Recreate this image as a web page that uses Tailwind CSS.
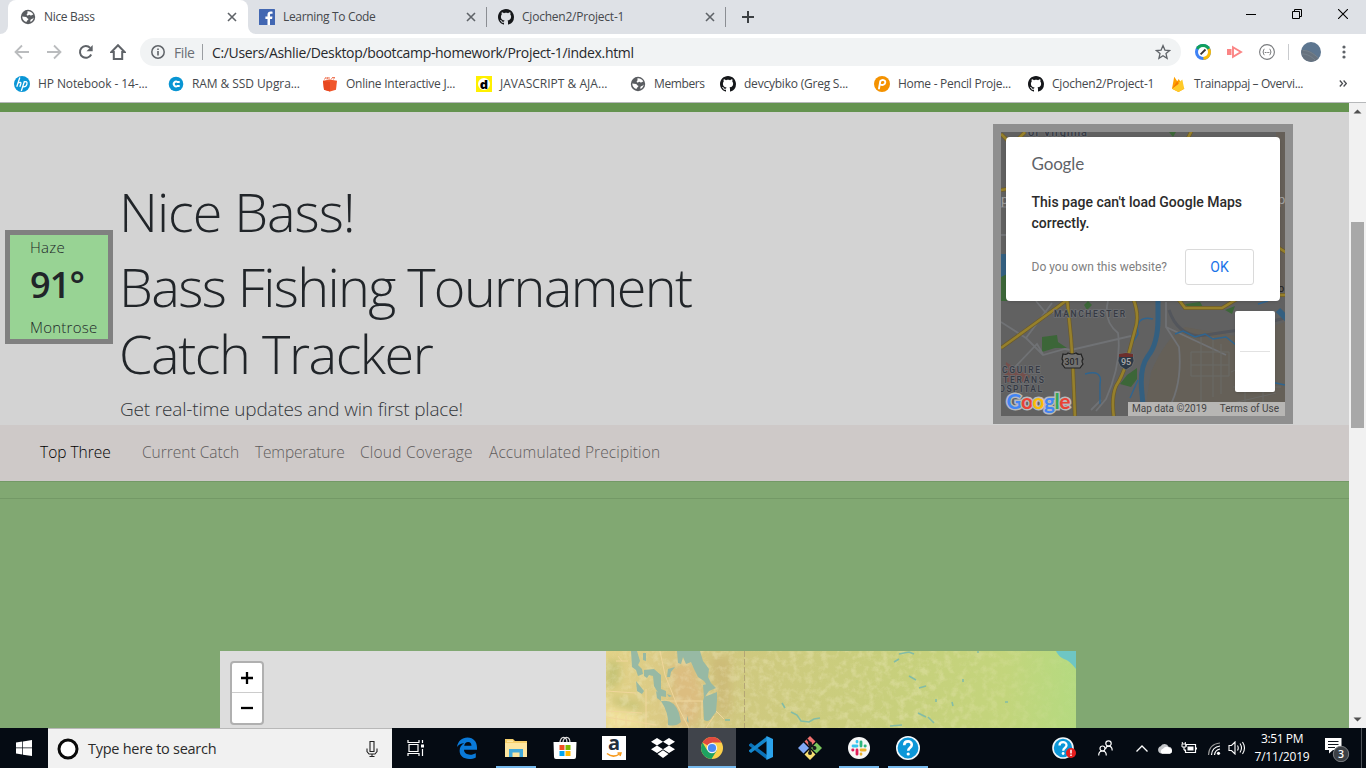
<!DOCTYPE html>
<html lang="en">
<head>
<meta charset="utf-8">
<title>Nice Bass</title>
<script src="https://cdn.jsdelivr.net/npm/@tailwindcss/browser@4"></script>
</head>
<body class="w-[1366px] h-[768px] overflow-hidden font-['Open_Sans',sans-serif] flex flex-col bg-white">
<svg class="hidden">
  <symbol id="gh" viewBox="0 0 16 16"><path d="M8 0C3.58 0 0 3.58 0 8c0 3.54 2.29 6.53 5.47 7.59.4.07.55-.17.55-.38 0-.19-.01-.82-.01-1.49-2.01.37-2.53-.49-2.69-.94-.09-.23-.48-.94-.82-1.13-.28-.15-.68-.52-.01-.53.63-.01 1.08.58 1.23.82.72 1.21 1.87.87 2.33.66.07-.52.28-.87.51-1.07-1.78-.2-3.64-.89-3.64-3.95 0-.87.31-1.59.82-2.15-.08-.2-.36-1.02.08-2.12 0 0 .67-.21 2.2.82.64-.18 1.32-.27 2-.27s1.36.09 2 .27c1.53-1.04 2.2-.82 2.2-.82.44 1.1.16 1.92.08 2.12.51.56.82 1.27.82 2.15 0 3.07-1.87 3.75-3.65 3.95.29.25.54.73.54 1.48 0 1.07-.01 1.93-.01 2.2 0 .21.15.46.55.38A8.01 8.01 0 0 0 16 8c0-4.42-3.58-8-8-8z" fill="#15171a"/></symbol>
  <symbol id="globe" viewBox="0 0 16 16"><circle cx="8" cy="8" r="7.2" fill="#5a5d61"/><path d="M2.2 7.6c1.2.3 2.6.2 3.9.5.9.3.6 1.3 1.7 1.5.9.2.6 1.5-.2 1.7-.7.2-.6 1.3-1.3 1.8C4 12.600 2.300 10.200 2.200 7.600zM7.500 2.300C10 2 12.500 3.500 13.300 5.500c-.9.2-1.300 1-2.200 1-.8 0-.9-.8-1.700-.8-1 0-1.200 1.100-2.200.8-.9-.3-.5-1.500.2-1.900.7-.4-.4-1.500.1-2.300zM13.700 8.500c-.3 2-1.500 3.700-3.200 4.600.1-.9-.5-1.500.1-2.300.6-.8 1.900-.6 3.100-2.300z" fill="#fff"/></symbol>
  <symbol id="x" viewBox="0 0 10 10"><path d="M1 1l8 8M9 1l-8 8" stroke="#5f6368" stroke-width="1.600"/></symbol>
</svg>

<!-- Tab strip -->
<header class="h-[34px] shrink-0 bg-[#dee1e6] flex">
  <div class="w-2 bg-white"><div class="h-full bg-[#dee1e6] rounded-br-lg"></div></div>
  <div class="w-60 h-full bg-white rounded-t-lg flex items-center pl-3">
    <svg class="size-4 mr-2"><use href="#globe"/></svg>
    <span class="text-[12px] tracking-[-0.32px] text-[#45484c] whitespace-nowrap">Nice Bass</span>
    <svg class="size-[10px] ml-auto mr-[11px]"><use href="#x"/></svg>
  </div>
  <div class="w-2 bg-white"><div class="h-full bg-[#dee1e6] rounded-bl-lg"></div></div>
  <div class="w-[231px] flex items-center pl-[3px]">
    <svg class="size-4 mr-2" viewBox="0 0 16 16"><rect width="16" height="16" rx=".6" fill="#4267b2"/><path d="M11 16v-6.100h2.100l.35-2.400H11V6c0-.75.250-1.200 1.250-1.200h1.300V2.650c-.25-.04-1-.1-1.850-.1C9.800 2.550 8.500 3.700 8.500 5.700v1.800H6.400v2.400h2.100V16z" fill="#fff"/></svg>
    <span class="text-[12px] tracking-[-0.33px] text-[#45484c] whitespace-nowrap">Learning To Code</span>
    <svg class="size-[10px] ml-auto mr-[10px]"><use href="#x"/></svg>
    <i class="w-px h-5 bg-[#8b8e93]"></i>
  </div>
  <div class="w-[239px] flex items-center pl-[11px]">
    <svg class="size-4 mr-2"><use href="#gh"/></svg>
    <span class="text-[12px] tracking-[-0.22px] text-[#45484c] whitespace-nowrap">Cjochen2/Project-1</span>
    <svg class="size-[10px] ml-auto mr-[10px]"><use href="#x"/></svg>
    <i class="w-px h-5 bg-[#8b8e93]"></i>
  </div>
  <div class="flex items-center pl-[16px]"><svg class="size-3" viewBox="0 0 12 12"><path d="M6 0v12M0 6h12" stroke="#3c4043" stroke-width="2"/></svg></div>
  <div class="ml-auto flex items-start pt-[9px] pr-[18px] gap-[36px]">
    <svg class="size-[10px]" viewBox="0 0 10 10"><path d="M0 5.500h10" stroke="#000"/></svg>
    <svg class="size-[10px]" viewBox="0 0 10 10"><path d="M2.500 2.500V.5h7v7h-2M.5 2.500h7v7h-7z" stroke="#000" fill="none"/></svg>
    <svg class="size-[10px]" viewBox="0 0 10 10"><path d="M0 0l10 10M10 0L0 10" stroke="#000" stroke-width="1.100"/></svg>
  </div>
</header>

<!-- Toolbar -->
<div class="h-9 shrink-0 flex items-center">
  <div class="flex items-center gap-[16px] pl-[14px] w-[140px]">
    <svg class="size-4" viewBox="0 0 16 16"><path d="M15 8H2M8 1.500L1.500 8 8 14.500" stroke="#babcbe" stroke-width="1.800" fill="none"/></svg>
    <svg class="size-4" viewBox="0 0 16 16"><path d="M1 8h13M8 1.500L14.500 8 8 14.500" stroke="#babcbe" stroke-width="1.800" fill="none"/></svg>
    <svg class="size-4" viewBox="0 0 16 16"><path d="M13.200 10.500A5.900 5.900 0 1 1 12.200 3.900" stroke="#5f6368" stroke-width="2" fill="none"/><path d="M14.700 1v6.200H8.500z" fill="#5f6368"/></svg>
    <svg class="size-4" viewBox="0 0 16 16"><path d="M8 1.200L1.400 8h2.400v6.900h8.400V8h2.400z" stroke="#5f6368" stroke-width="2" fill="none"/></svg>
  </div>
  <div class="w-[1041px] h-7 rounded-full bg-[#f1f3f4] flex items-center pl-[11px] pr-[10px]">
    <svg class="size-[14px] mr-[9px]" viewBox="0 0 14 14"><circle cx="7" cy="7" r="6.200" stroke="#5f6368" stroke-width="1.500" fill="none"/><path d="M6.200 6h1.600v4.500H6.200zM6.200 3.400h1.600V5H6.200z" fill="#5f6368"/></svg>
    <span class="text-[14px] tracking-[-0.4px] text-[#6b6f74] w-[28px] whitespace-nowrap">File</span>
    <i class="w-px h-4 bg-[#9a9da1] mr-[9px]"></i>
    <span class="text-[14px] tracking-[-0.335px] text-[#27292c] whitespace-nowrap">C:/Users/Ashlie/Desktop/bootcamp-homework/Project-1/index.html</span>
    <svg class="size-4 ml-auto" viewBox="0 0 16 16"><path d="M8 1.600l1.900 4.500 4.700.4-3.600 3.100 1.100 4.700L8 11.800l-4.100 2.500L5 9.600 1.400 6.500l4.700-.4z" fill="none" stroke="#5f6368" stroke-width="1.300"/></svg>
  </div>
  <div class="flex items-center pl-[14px]">
    <svg class="size-4 mr-4" viewBox="0 0 16 16"><circle cx="8" cy="8" r="8" fill="#3f82f5"/><path d="M8 8L1 4.200A8 8 0 0 1 15 4.200z" fill="#11a05c"/><path d="M8 8l7-3.800A8 8 0 0 1 8.500 16z" fill="#fbbc05"/><circle cx="8" cy="8" r="5" fill="#fff"/><path d="M5.600 10.400L10.500 5.500" stroke="#333" stroke-width="1.800"/></svg>
    <svg class="size-4 mr-4" viewBox="0 0 16 16"><path d="M0 5h4.500v6H0z" fill="#fb8585"/><path d="M6 3.200L14 8l-8 4.800z" fill="#fff" stroke="#fb8585" stroke-width="1.900"/></svg>
    <svg class="size-4 mr-[13px]" viewBox="0 0 16 16"><circle cx="8" cy="8" r="7.400" fill="none" stroke="#77797c" stroke-width="1.100"/><path d="M5.400 5.200c-1.300 0-.5 2.300-1.600 2.800 1.100.5.300 2.800 1.600 2.800M10.600 5.200c1.300 0 .5 2.300 1.600 2.800-1.100.5-.3 2.800-1.600 2.800M5.800 8.500h1M7.600 8.500h1M9.300 8.500h1" fill="none" stroke="#606265" stroke-width="1"/></svg>
    <i class="w-px h-4 bg-[#c9cbce] mr-3"></i>
    <svg class="size-5 mr-[21px]" viewBox="0 0 20 20"><circle cx="10" cy="10" r="10" fill="#5d7690"/><path d="M.5 8C6 7 13 10 17.500 16.500 14 20 9 20.500 5 18.500 1 16 0 12 .5 8z" fill="#67727e"/><path d="M2 8.500c6 0 10 3 15 7M1 12c5 0 9 2 13 6" stroke="#78858f" stroke-width=".8" fill="none"/></svg>
    <svg class="w-1 h-4" viewBox="0 0 4 16"><g fill="#5f6368"><circle cx="2" cy="3" r="1.600"/><circle cx="2" cy="8" r="1.600"/><circle cx="2" cy="13" r="1.600"/></g></svg>
  </div>
</div>

<!-- Bookmarks -->
<div class="h-[33px] shrink-0 border-b border-[#b6b8ba] flex items-center pl-[14px] pb-[5px] text-[12px] text-[#45484c] whitespace-nowrap">
  <div class="w-[154px] flex items-center gap-2"><svg class="size-4" viewBox="0 0 16 16"><circle cx="8" cy="8" r="8" fill="#0a96d6"/><path d="M5.800 1.500L2.800 10.800M4 7.200c2-1.500 3.300-1 2.800.6l-1 3M10.500 5L7.300 15M9.900 6.300c2.400-1.300 3.600-.4 3 1.800-.6 2.300-2.200 3.100-4.300 2.700" stroke="#fff" stroke-width="1.300" fill="none"/></svg><span class="tracking-[-0.1px]">HP Notebook - 14-...</span></div>
  <div class="w-[154px] flex items-center gap-2"><svg class="size-4" viewBox="0 0 16 16"><circle cx="8" cy="8" r="7.300" fill="#0995d3"/><path d="M11.700 6H9.500a2.400 2.400 0 1 0 0 4h2.200" stroke="#fff" stroke-width="2" fill="none"/></svg><span class="tracking-[-0.08px]">RAM &amp; SSD Upgra...</span></div>
  <div class="w-[154px] flex items-center gap-2"><svg class="size-4" viewBox="0 0 16 16"><path d="M1 4.800l6.500-1.200L15 4.800l-1 9L8 15.500l-6-1.700z" fill="#f0562b"/><path d="M1 4.800l7 1.200v9.500l-6-1.700z" fill="#e8471f"/><path d="M2.500 3.500l1-2M5 3.500l1-2.500M7 3.500V1M9 3.500l2-2.500M11.500 3.500l1-2M3 2h3M10 1.500h3" stroke="#ef7a5c" fill="none"/></svg><span class="tracking-[-0.25px]">Online Interactive J...</span></div>
  <div class="w-[154px] flex items-center gap-2"><i class="size-4 bg-[#fff000] grid place-items-center"><b class="size-3 rounded-full bg-white grid place-items-center not-italic font-black text-[13px] leading-none text-black">d</b></i><span class="tracking-[0.02px]">JAVASCRIPT &amp; AJA...</span></div>
  <div class="w-[90px] flex items-center gap-2"><svg class="size-4"><use href="#globe"/></svg><span class="tracking-[-0.4px]">Members</span></div>
  <div class="w-[154px] flex items-center gap-2"><svg class="size-4"><use href="#gh"/></svg><span class="tracking-[-0.22px]">devcybiko (Greg S...</span></div>
  <div class="w-[154px] flex items-center gap-2"><svg class="size-4" viewBox="0 0 16 16"><circle cx="8" cy="8" r="8" fill="#f49200"/><path d="M5 12.500L6.300 5.200C8 3.200 11.400 3.800 11.300 6.300 11.200 8.500 8.500 9.600 6.500 8.500" stroke="#fff" stroke-width="1.900" fill="none" stroke-linecap="round"/></svg><span class="tracking-[-0.27px]">Home - Pencil Proje...</span></div>
  <div class="w-[142px] flex items-center gap-2"><svg class="size-4"><use href="#gh"/></svg><span class="tracking-[-0.22px]">Cjochen2/Project-1</span></div>
  <div class="w-[154px] flex items-center gap-2"><svg class="size-4" viewBox="0 0 16 16"><path d="M2 12.800L4.200.8l3 4.400L8.800 3l5.600 9.800L8.500 16z" fill="#ffa000"/><path d="M2 12.800L12.300 3.500l1.900 9.300L8.500 16z" fill="#ffca28"/><path d="M2 12.800L7.200 5.200l1.600 2.600z" fill="#f57c00"/></svg><span class="tracking-[-0.38px]">Trainappaj – Overvi...</span></div>
  <svg class="w-2 h-[7px] ml-[15px]" viewBox="0 0 8 7"><path d="M.8.500l2.700 3-2.700 3M4.600.500l2.700 3-2.700 3" stroke="#4a4d51" stroke-width="1.300" fill="none"/></svg>
</div>

<!-- Page viewport -->
<div class="h-[625px] shrink-0 flex">
<main class="w-[1349px] h-full overflow-hidden bg-[#81a872] text-[#212529]">
  <div class="h-[9px] bg-[#64934f]"></div>
  <section class="h-[313px] bg-[#d3d3d3] flex pl-[5px]">
    <div class="mt-[118px] w-[108px] h-[114px] shrink-0 border-5 border-[#808080] bg-[#98d394] pl-5 whitespace-nowrap">
      <p class="text-[15px] leading-6 font-light tracking-[0.25px]">Haze</p>
      <p class="text-[36px] leading-[48px] font-semibold mt-[2px] tracking-[-0.8px]">91°</p>
      <p class="text-[15px] leading-6 font-light mt-[6px] tracking-[0.25px]">Montrose</p>
    </div>
    <div class="ml-[6px] mt-[66px] w-[874px] font-light whitespace-nowrap">
      <h1 class="text-[54px] leading-[67px] tracking-[-1.05px]">Nice Bass!</h1>
      <h1 class="text-[54px] leading-[67px] mt-2 tracking-[-1.63px]">Bass Fishing Tournament<br><span class="tracking-[-1.45px]">Catch Tracker</span></h1>
      <p class="text-[19px] leading-[30px] mt-[7px] pl-px text-[#33373b] tracking-[-0.17px]">Get real-time updates and win first place!</p>
    </div>
    <!-- Street map with error dialog -->
    <div class="mt-3 size-[300px] border-8 border-[#8f8f8f] bg-[#616161] relative overflow-hidden font-[Roboto,sans-serif]">
      <svg class="size-[284px]" viewBox="0 0 284 284" fill="none">
        <rect width="284" height="284" fill="#616161"/>
        <path d="M150 240Q165 205 184 195L240 205 284 190V284H143z" fill="#656058"/><path d="M275 0h9v160h-9z" fill="#655f58"/>
        <path d="M0 122h6v25H0z" fill="#335f80"/><path d="M0 145l6-3v27H0zM168 0h7l-3 5zM83 173l4-4 4 4-5 5zM41 205l15-2 1 7 9 6-12 0-13 4zM184 172l15-2 3 5-14 1zM224 178l10-4-3 8zM126 243l10-7v11l-6 8-11-3z" fill="#3c6638"/>
        <path d="M5 230l12 8 12 6-3 6H3z" fill="#75504c"/>
        <g stroke="#707275" stroke-width="1.800"><path d="M0 190l25 16 26-35M14 235l22-23 6 10M25 206l17 17 22-6 6 1 60-14M35 169l10 12 60-3M107 169q-5 20 10 32 4 30-12 66l-10 12M90 278l10-10M0 75h6M0 103h6M165 170v25l13 20q4 40-13 66M165 195l60 28"/></g>
        <path d="M168 178q8 24 30 26l40-6 46-12" stroke="#53565c" stroke-width="3"/>
        <g stroke="#6b6a67" stroke-width="1"><path d="M190 220h38v24h-38zM200 205v65M212 205v60M220 212v50M230 240l40-18M232 255h48M190 233h38M244 212v60M262 210v60M215 275l60-14"/></g>
        <path d="M152 187q-18-4-15 15l-6 10M84 242q18-5 15 10v20M174 202l8-3 12 6 10-3 8 5 13-2 10 8M257 172l10-3M137 248l-8 18M270 250l14 3" stroke="#2f6590" stroke-width="1.400"/>
        <path d="M277 178l9 9" stroke="#335f80" stroke-width="6"/>
        <path d="M157 166v20Q157 212 147 224 138 236 141 262L143 284" stroke="#335f80" stroke-width="5"/>
        <g stroke="#6b5a2c" stroke-width="4"><path d="M66 166l4 40 2 30 2 50M66 168Q50 180 0 216M132 166q7 18 2 32l-9 34q-4 13-10 22-5 12-2 32M178 168l6 8h37l20-12M0 2l8 8M187 6l4-8M24 0l-8 8M278 116l8 5M278 163h8M0 58l6-1"/></g>
        <g stroke="#96802b" stroke-width="2.600"><path d="M66 166l4 40 2 30 2 50M66 168Q50 180 0 216M132 166q7 18 2 32l-9 34q-4 13-10 22-5 12-2 32M178 168l6 8h37l20-12M0 2l8 8M187 6l4-8M24 0l-8 8M278 116l8 5M278 163h8M0 58l6-1"/></g>
        <g font-family="Roboto" font-size="8.500" font-weight="500" fill="#363a43" stroke="#6d6f73" stroke-width="1.600" paint-order="stroke"><text x="27" y="4" font-size="11" textLength="59">of Virginia</text><text x="53" y="185" textLength="71">MANCHESTER</text><text x="1" y="241" textLength="38">CGUIRE</text><text x="2" y="251" textLength="41">TERANS</text><text x="-2" y="260" textLength="43">OSPITAL</text></g>
        <path d="M62 222q4 1 5-1 4 2 8 0 2 2 5 1l2 5q-2 2 0 5l-3 4H64l-3-4q2-3 0-5z" fill="#707070" stroke="#222" stroke-width="1.200"/><text x="63.500" y="232.500" font-family="Roboto" font-size="9" fill="#181818">301</text>
        <path d="M118 222l7-1 7 1 1 7-2 5-6 4-6-4-2-5z" fill="#2c3846" stroke="#777" stroke-width=".7"/><path d="M118 222l7-1 7 1v3h-14z" fill="#6d2f2c"/><text x="120" y="233" font-family="Roboto" font-size="9" font-weight="500" fill="#aaa">95</text>
        <text x="0" y="72" font-family="Roboto" font-size="13" fill="#a0a0a0">p</text><text x="277" y="72" font-family="Roboto" font-size="13" fill="#a0a0a0">p</text>
        <text x="277" y="160" font-family="Roboto" font-size="11" fill="#222">o</text>
      </svg>
      <div class="absolute left-[5px] top-[5px] w-[274px] h-[164px] rounded-[4px] bg-white pl-[25.5px] pr-[26px] pt-[16px] shadow flex flex-col">
        <div class="text-[17px] leading-[22px] text-[#5f6368] font-['Lato',sans-serif] whitespace-nowrap tracking-[-0.15px]">Google</div>
        <p class="text-[14px] leading-[21px] font-medium text-[#2b2b2b] mt-[17px] whitespace-nowrap">This page can't load Google Maps<br>correctly.</p>
        <div class="flex items-center justify-between mt-[15px]"><span class="text-[12px] text-[#808080] whitespace-nowrap tracking-[0.02px]">Do you own this website?</span><span class="w-[69px] h-[36px] border border-[#dadada] rounded-[3px] grid place-items-center text-[14px] text-[#1a73e8]">OK</span></div>
      </div>
      <div class="absolute left-[234px] top-[179px] w-10 h-[81px] rounded-[2px] bg-white px-[5px] pt-10 shadow"><div class="h-px bg-[#e2e2e2]"></div></div>
      <svg class="absolute left-[4px] top-[256px] w-[70px] h-7" viewBox="0 0 70 28"><text x="1.500" y="20.500" font-family="Lato" font-size="21" font-weight="700" stroke="#b8babd" stroke-width="3" paint-order="stroke" textLength="64"><tspan fill="#4285f4">G</tspan><tspan fill="#ea4335">o</tspan><tspan fill="#fbbc05">o</tspan><tspan fill="#4285f4">g</tspan><tspan fill="#34a853">l</tspan><tspan fill="#ea4335">e</tspan></text></svg>
      <div class="absolute right-0 bottom-0 h-[14px] w-[157px] bg-[#b7b6b4] text-[10px] leading-[14px] text-[#444] flex justify-between pl-[4px] pr-[6px] whitespace-nowrap"><span>Map data ©2019</span><span>Terms of Use</span></div>
    </div>
  </section>
  <nav class="h-[56px] bg-[#cec9c8] flex items-center pl-10 text-[15.5px] font-light text-[#5f5c5c] whitespace-nowrap">
    <span class="w-[102px] text-black">Top Three</span>
    <span class="w-[113px]">Current Catch</span>
    <span class="w-[105px] tracking-[-0.15px]">Temperature</span>
    <span class="w-[129px] tracking-[0.22px]">Cloud Coverage</span>
    <span class="tracking-[0.1px]">Accumulated Precipition</span>
  </nav>
  <div class="h-[18px] border-y border-[#739966]"></div>
  <div class="mt-[152px] ml-[220px] w-[856px] h-[77px] bg-[#ddd] flex">
    <div class="w-[386px] pl-[10px] pt-[10px]">
      <div class="w-[34px] h-16 border-2 border-[#b0b0b0] rounded-[4px] bg-white flex flex-col">
        <div class="h-[30px] border-b border-[#ccc] grid place-items-center"><svg class="size-3" viewBox="0 0 12 12"><path d="M6 0v12M0 6h12" stroke="#000" stroke-width="2.300"/></svg></div>
        <div class="h-[30px] grid place-items-center"><svg class="size-3" viewBox="0 0 12 12"><path d="M0 6h12" stroke="#000" stroke-width="2.300"/></svg></div>
      </div>
    </div>
    <!-- Terrain tiles -->
    <svg class="w-[470px] h-[77px]" viewBox="0 0 470 77" fill="none">
      <defs>
        <linearGradient id="t"><stop offset="0" stop-color="#e3d388"/><stop offset=".15" stop-color="#d8c783"/><stop offset=".3" stop-color="#cfc97f"/><stop offset=".6" stop-color="#c8cf7c"/><stop offset=".85" stop-color="#c3d57c"/><stop offset="1" stop-color="#b5da80"/></linearGradient>
        <filter id="n" x="0" y="0" width="100%" height="100%"><feTurbulence type="fractalNoise" baseFrequency=".13" numOctaves="4" seed="9"/><feColorMatrix values="0 0 0 0 .9 0 0 0 0 .85 0 0 0 0 .56 0 3 0 0 -1.300"/></filter>
        <filter id="b"><feGaussianBlur stdDeviation="4"/></filter>
        <linearGradient id="f"><stop offset="0" stop-color="#fff"/><stop offset=".65" stop-color="#fff"/><stop offset="1" stop-color="#222"/></linearGradient>
        <mask id="m"><rect width="470" height="77" fill="url(#f)"/></mask>
      </defs>
      <rect width="470" height="77" fill="url(#t)"/>
      <g filter="url(#b)"><path d="M0 10h14v22l-10 6H0zM5 46l30 6v8L8 54z" fill="#c4c274"/><path d="M66 15l20-4 12 30-6 30-18 6-8-30z" fill="#dcbd80"/><path d="M105 5h20v60h-15z" fill="#cdbc78"/><path d="M0 55l30 8 10 14H0z" fill="#f1e09a"/></g>
      <g mask="url(#m)"><rect width="470" height="77" filter="url(#n)" opacity=".32"/></g>
      <path d="M0 40l30 2M12 5l4 5M40 38v39M0 66l50 8M54 0l5 24 12 30 12 23M55 50l20 0M75 50h22M96 50v18M10 10h12M0 60l36 2M108 58l10 10M100 77l8-12M10 64v13M20 64v13" stroke="#efd69b" stroke-width="1"/>
      <path d="M138.500 0v77" stroke="#b4a676" stroke-width="1" stroke-dasharray="6 2"/>
      <g fill="#97b9a4"><path d="M25 0h6l3 10-2 4 4 4 1 5-5 2-2-6-4-3zM37 2h3v8l-3-1zM38 19l10-1 7 6v14l5 2v6l-6-1-6-10-1-10-4-1-2 3-3-2zM62 18l7-2-4 5-1 5-3 0zM30 30l8 10-2 3-5-3zM50 40l5 4v6l-4-3zM56 50q12-2 17 12l2 9q-5 5-13 3 1-12-7-24zM71 0h23l3 10 6 8-1 8 4 8-4 2-4-6-6-4-4-8-3-7-5 2-3-7-2 7-3-1zM97 34l8-2 5 5-7 3-5 7zM98 46l8-3 5-2 0 8-1 12-4 5q-3 6-8 3l-1-19z"/><path d="M61 43l5 2-3 1zM81 64l2 8-2-2z"/></g>
      <g stroke="#83bca6" stroke-width="1.600"><path d="M176 52l3 5M185 61l6 3 4 6 8 1 5-3 6-1M293 3l10-2 5 2M288 11l5-3M303 25l7 4M313 37l7-2M330 48v3M346 51l1 4M357 28v3M312 62l8 4M322 66l6 6M284 75l12-1M119 69h5M399 51l3 0M371 1h2"/></g>
      <path d="M450 0h20v18q-7-9-12-10-6-3-8-8z" fill="#6ec6c4"/>
    </svg>
  </div>
</main>
<!-- Scrollbar -->
<aside class="w-[17px] bg-[#f1f1f1] flex flex-col items-center">
  <svg class="h-[17px] w-[17px]" viewBox="0 0 17 17"><path d="M4.500 10.500l4-4 4 4z" fill="#505050"/></svg>
  <div class="mt-[102px] w-[13px] h-[206px] bg-[#a8a8a8]"></div>
  <svg class="h-[17px] w-[17px] mt-auto" viewBox="0 0 17 17"><path d="M4.500 6.500l4 4 4-4z" fill="#505050"/></svg>
</aside>
</div>

<!-- Taskbar -->
<footer class="h-10 shrink-0 bg-[#050b13] flex text-white">
  <div class="w-12 grid place-items-center"><svg class="size-4" viewBox="0 0 16 16"><path d="M0 2.400l6.300-.9v6H0zM7 1.400L16 0v7.500H7zM0 8.300h6.300v6.100L0 13.500zM7 8.300h9V16l-9-1.300z" fill="#fff"/></svg></div>
  <div class="w-[344px] bg-[#f1f1f1] border-t border-[#b8b8b8] flex items-center pl-[9px] pr-[14px] text-[#2b2b2b]">
    <svg class="size-[22px] mr-[9px]" viewBox="0 0 22 22"><circle cx="11" cy="11" r="9" fill="#fff" stroke="#0a0a0a" stroke-width="3"/></svg>
    <span class="text-[14.5px] tracking-[-0.27px] whitespace-nowrap">Type here to search</span>
    <svg class="w-3 h-4 ml-auto" viewBox="0 0 12 16"><path d="M4 .5h4v10H4zM1 7.500v3l2 2.500h6l2-2.500v-3M6 13v2.500M3.500 15.500h5" stroke="#222" stroke-width="1.100" fill="none"/></svg>
  </div>
  <div class="w-[51px] grid place-items-center"><svg class="w-[18px] h-4 -ml-[3px]" viewBox="0 0 18 16"><path d="M1 0v2.500h11V0M1 16v-2.500h11V16M2 4.500h9v7H2zM15.500 0v3M15.500 9v7" stroke="#fff" stroke-width="1.200" fill="none"/><path d="M14 4.500h3v3h-3z" fill="#fff"/></svg></div>
  <div class="flex gap-px">
    <div class="w-12 grid place-items-center"><svg class="size-[22px]" viewBox="0 0 22 22"><path d="M1 10C2 4 6 .6 11.500.6 17.500.6 21 5 21 10.500v2.300H8c.1 3.400 3 4.900 6.200 4.900 2.200 0 4-.6 5.600-1.500v4.200c-2 1.100-4.200 1.500-6.600 1.500C7.500 21.900 3.600 18.700 3.600 13.700c0-3.300 1.800-6 4.700-7.400C5 6.500 2.500 7.800 1 10zM8.200 8.800h7.300c0-2.300-1.200-3.700-3.400-3.700-2.100 0-3.500 1.500-3.900 3.700z" fill="#0a7ad9"/></svg></div>
    <div class="w-12 flex flex-col items-center pt-[11px]"><svg class="w-[22px] h-[18px]" viewBox="0 0 22 18"><path d="M0 0h8l2 2h12v16H0z" fill="#f5cf6b"/><path d="M0 4h22v14H0z" fill="#fde6a0"/><path d="M2 2.200h6" stroke="#fff3c4"/><path d="M4 18v-8h14v8h-3.500v-4.500h-7V18z" fill="#42aadb"/></svg><i class="w-10 h-[2px] bg-[#76b9ed] mt-auto"></i></div>
    <div class="w-12 grid place-items-center"><svg class="size-6" viewBox="0 0 24 24"><path d="M7 7C7-.5 14-.5 14 7M10 7C10-.5 17-.5 17 7" stroke="#ddd" stroke-width="1.200" fill="none"/><path d="M0.500 6h23l-.5 15q0 2-2 2H3q-2 0-2-2z" fill="#fff"/><path d="M6.500 9h5v5h-5z" fill="#f25022"/><path d="M12.500 9h5v5h-5z" fill="#7fba00"/><path d="M6.500 15h5v5h-5z" fill="#00a4ef"/><path d="M12.500 15h5v5h-5z" fill="#ffb900"/></svg></div>
    <div class="w-12 grid place-items-center"><i class="size-6 bg-white flex flex-col items-center not-italic"><b class="text-[20px] leading-[14px] h-[15px] text-[#222e3c]">a</b><svg class="w-4 h-[6px] mt-[1px]" viewBox="0 0 16 6"><path d="M1 1.500Q7 6.500 13.500 2M11.500 1h3.500l-1 3" stroke="#f79a1c" stroke-width="1.500" fill="none"/></svg></i></div>
    <div class="w-12 grid place-items-center"><svg class="w-6 h-5" viewBox="0 0 24 20"><path d="M6 0l6 3.700-6 3.800L0 3.700zM18 0l6 3.700-6 3.800-6-3.800zM6 7.500l6 3.700L6 15l-6-3.800zM18 7.500l6 3.700-6 3.800-6-3.800zM12 12.300l5.500 3.700L12 20l-5.500-4z" fill="#fff"/></svg></div>
    <div class="w-12 flex flex-col items-center pt-[9px] bg-[#40444b]"><svg class="size-[22px]" viewBox="0 0 22 22"><circle cx="11" cy="11" r="11" fill="#fbd04b"/><path d="M11 11L1.500 5.500A11 11 0 0 1 20.500 5.500H11z" fill="#e04a3f"/><path d="M1.500 5.500A11 11 0 0 0 10.500 22L15.800 13.500 11 11 6 13z" fill="#1da261"/><circle cx="11" cy="11" r="5.200" fill="#f4f4f4"/><circle cx="11" cy="11" r="4.100" fill="#4a8af4"/></svg><i class="w-12 h-[2px] bg-[#76b9ed] mt-auto"></i></div>
    <div class="w-12 grid place-items-center"><svg class="size-6" viewBox="0 0 24 24"><path d="M0 8.500l2-1.500L18 19v4.500L0 9.800z" fill="#0a72b8"/><path d="M0 15.500L2 17 18 5V.5L0 14.200z" fill="#1487cc"/><path d="M17.500 0L24 3v18l-6.500 3z" fill="#2ba3ec"/></svg></div>
    <div class="w-12 grid place-items-center"><svg class="size-6" viewBox="0 0 24 24"><path d="M12 0l5.500 5.500L12 11 6.500 5.500z" fill="#f0706e"/><path d="M18.500 6.500L24 12l-5.500 5.500L13 12z" fill="#7bc75c"/><path d="M12 13l5.500 5.500L12 24l-5.500-5.500z" fill="#f8df72"/><path d="M5.500 6.500L11 12l-5.500 5.500L0 12z" fill="#80a8f5"/><path d="M9 3l3 4v11M12 8l5 4" stroke="#16191d" stroke-width="1.800" fill="none"/><circle cx="12" cy="7.500" r="2" fill="#16191d"/><circle cx="16.500" cy="12" r="2" fill="#16191d"/><circle cx="12" cy="17" r="2" fill="#16191d"/></svg></div>
    <div class="w-12 flex flex-col items-center pt-[9px]"><svg class="size-[22px]" viewBox="0 0 22 22"><circle cx="11" cy="11" r="11" fill="#f6f6f6"/><g stroke-width="2.800" stroke-linecap="round"><path d="M9 4.500V5M5 9h4" stroke="#36c5f0"/><path d="M13 4.800V9M17 9h.3" stroke="#2eb67d"/><path d="M13 13h4.200M13 17v.3" stroke="#ecb22e"/><path d="M9 13v4.200M5 13h-.3" stroke="#e01e5a"/></g></svg><i class="w-10 h-[2px] bg-[#76b9ed] mt-auto"></i></div>
    <div class="w-12 flex flex-col items-center pt-2"><svg class="size-6" viewBox="0 0 24 24"><circle cx="12" cy="12" r="11.200" fill="#0c97d8" stroke="#f2f8fb" stroke-width="1.600"/><path d="M8.200 9.200c0-5 7.600-5 7.600-.4 0 3-3.600 3-3.600 6" stroke="#fff" stroke-width="2.600" fill="none"/><circle cx="12.200" cy="18" r="1.600" fill="#fff"/></svg><i class="w-10 h-[2px] bg-[#76b9ed] mt-auto"></i></div>
  </div>
  <div class="ml-auto flex items-center pr-1">
    <svg class="size-6 mr-[22px]" viewBox="0 0 24 24"><circle cx="11" cy="12" r="10" fill="#0c97d8" stroke="#f2f8fb" stroke-width="1.600"/><path d="M7.500 9.500c0-4.500 7-4.500 7-.3 0 2.600-3.300 2.800-3.300 5.500" stroke="#fff" stroke-width="2.300" fill="none"/><circle cx="11.100" cy="17.500" r="1.400" fill="#fff"/><circle cx="19" cy="17" r="5" fill="#e81e1e"/><path d="M19 13.800v3.800M19 18.600v1.500" stroke="#fff" stroke-width="1.500"/></svg>
    <svg class="size-4 mr-[22px]" viewBox="0 0 16 16"><g stroke="#fff" stroke-width="1.200" fill="none"><circle cx="4.500" cy="8.500" r="2.500"/><circle cx="10.500" cy="3.500" r="2.700"/><path d="M.7 15.500q0-4.500 3.800-4.500t3.800 4.500M7.500 9q.7-2.800 3-2.800 3.700 0 3.700 4.300"/></g></svg>
    <svg class="w-3 h-[7px] mr-[9px]" viewBox="0 0 12 7"><path d="M.5 6.500L6 1l5.500 5.500" stroke="#fff" stroke-width="1.300" fill="none"/></svg>
    <svg class="w-4 h-[11px] mr-2" viewBox="0 0 16 11"><path d="M4 10.500a3.800 3.800 0 0 1-.3-7.300 4.500 4.500 0 0 1 7.900.5 3.500 3.500 0 0 1 1 6.800z" fill="#c4c6c9"/><path d="M5 10.800a2.800 2.800 0 0 1 1-5 4 4 0 0 1 6.500-.8 3 3 0 0 1 .5 5.800z" fill="#fff"/></svg>
    <svg class="w-4 h-3 mr-[10px]" viewBox="0 0 16 12"><path d="M5 4.500V2.500h9.500v8H4.500V7.500M3 5v2.500l2 2" stroke="#fff" stroke-width="1.200" fill="none"/><path d="M1 2h4v3H1zM1.300 0v2M4.300 0v2" stroke="#fff" stroke-width="1" fill="none"/><path d="M6.500 4.500h6v4h-6zM15 5.500h1v2h-1z" fill="#fff"/></svg>
    <svg class="size-[14px] mr-[7px]" viewBox="0 0 14 14"><g fill="none" stroke="#fff" stroke-width="1.200"><path d="M1.500 14Q2 3 13 2" stroke="#999"/><path d="M4.500 14Q5 6 13 5M7.500 14Q8 9 13 8"/></g><circle cx="11.500" cy="12.300" r="1.600" fill="#fff"/></svg>
    <svg class="w-[18px] h-[14px] mr-[8px]" viewBox="0 0 18 14"><path d="M1 4.500h2.500L7 1v12L3.500 9.500H1zM9.500 4.500q1.500 2.500 0 5M12 2.500q3 4.500 0 9M14.500 1q4 6 0 12" stroke="#fff" stroke-width="1.100" fill="none"/></svg>
    <div class="w-[56px] text-center text-[12px] leading-[18px] whitespace-nowrap"><span class="tracking-[-0.4px]">3:51 PM</span><br><span class="tracking-[-0.2px]">7/11/2019</span></div>
    <svg class="w-[26px] h-6 ml-[15px] mt-[4px]" viewBox="0 0 26 24"><path d="M0 0h16.500v12H8l-4 3.500V12H0z" fill="#fff"/><path d="M3 3.500h10.500M3 6.500h10.500M3 9.500h7" stroke="#10151c" stroke-width="1.200"/><circle cx="16" cy="16" r="7.700" fill="#3c4045" stroke="#7a7d81" stroke-width="1"/><text x="13" y="20" font-family="Open Sans" font-size="10.500" font-weight="600" fill="#fff">3</text></svg>
    <i class="w-px h-10 bg-[#4c5158] ml-[10px]"></i>
  </div>
</footer>
</body>
</html>
